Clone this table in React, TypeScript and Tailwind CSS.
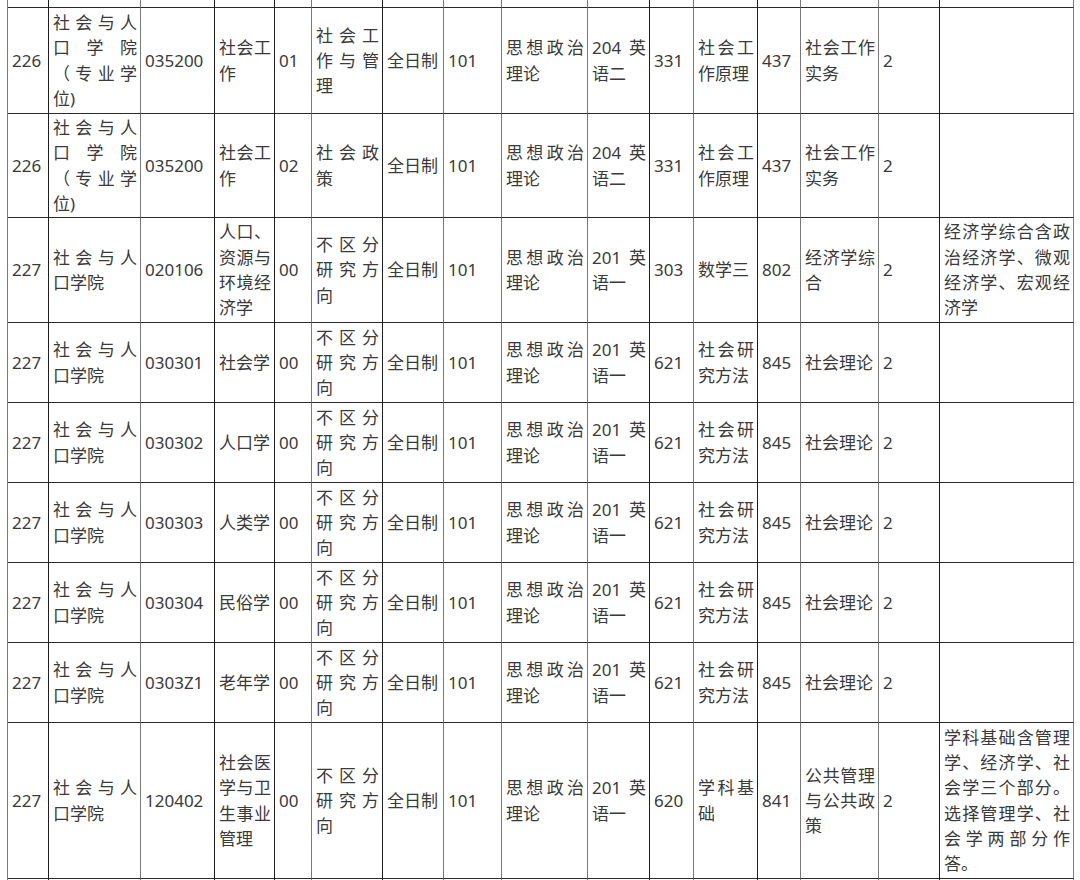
import React from "react";

const RIGHT = [
  "border-r-[#1e1e1e]",
  "border-r-[#7a7a7a]",
  "border-r-[#1e1e1e]",
  "border-r-[#1e1e1e]",
  "border-r-[#7a7a7a]",
  "border-r-[#1e1e1e]",
  "border-r-[#7a7a7a]",
  "border-r-[#7a7a7a]",
  "border-r-[#7a7a7a]",
  "border-r-[#1e1e1e]",
  "border-r-[#7a7a7a]",
  "border-r-[#1e1e1e]",
  "border-r-[#7a7a7a]",
  "border-r-[#7a7a7a]",
  "border-r-[#1e1e1e]",
  "border-r-[#7a7a7a]",
];

const common = (
  code: string,
  major: string,
  dir: string,
  dirName: string
): string[] => [
  "227",
  "社会与人口学院",
  code,
  major,
  dir,
  dirName,
  "全日制",
  "101",
  "思想政治理论",
  "201 英语一",
  "621",
  "社会研究方法",
  "845",
  "社会理论",
  "2",
  "",
];

const rows: string[][] = [
  [
    "226",
    "社会与人口学院（专业学位)",
    "035200",
    "社会工作",
    "01",
    "社会工作与管理",
    "全日制",
    "101",
    "思想政治理论",
    "204 英语二",
    "331",
    "社会工作原理",
    "437",
    "社会工作实务",
    "2",
    "",
  ],
  [
    "226",
    "社会与人口学院（专业学位)",
    "035200",
    "社会工作",
    "02",
    "社会政策",
    "全日制",
    "101",
    "思想政治理论",
    "204 英语二",
    "331",
    "社会工作原理",
    "437",
    "社会工作实务",
    "2",
    "",
  ],
  [
    "227",
    "社会与人口学院",
    "020106",
    "人口、资源与环境经济学",
    "00",
    "不区分研究方向",
    "全日制",
    "101",
    "思想政治理论",
    "201 英语一",
    "303",
    "数学三",
    "802",
    "经济学综合",
    "2",
    "经济学综合含政治经济学、微观经济学、宏观经济学",
  ],
  common("030301", "社会学", "00", "不区分研究方向"),
  common("030302", "人口学", "00", "不区分研究方向"),
  common("030303", "人类学", "00", "不区分研究方向"),
  common("030304", "民俗学", "00", "不区分研究方向"),
  common("0303Z1", "老年学", "00", "不区分研究方向"),
  [
    "227",
    "社会与人口学院",
    "120402",
    "社会医学与卫生事业管理",
    "00",
    "不区分研究方向",
    "全日制",
    "101",
    "思想政治理论",
    "201 英语一",
    "620",
    "学科基础",
    "841",
    "公共管理与公共政策",
    "2",
    "学科基础含管理学、经济学、社会学三个部分。选择管理学、社会学两部分作答。",
  ],
];

const empty = Array.from({ length: 16 }, () => "");

function Cell({ text, col }: { text: string; col: number }) {
  return (
    <div
      className={`flex items-center border-r border-b border-b-[#2a2a2a] ${RIGHT[col]} pl-[4px] pr-[3px] overflow-hidden`}
    >
      <div className="w-full text-justify">{text}</div>
    </div>
  );
}

export default function App() {
  const all = [empty, ...rows, empty];
  return (
    <div
      lang="zh-CN"
      className="w-[1080px] h-[880px] overflow-hidden bg-white text-[#3a3a3a] text-[17px] leading-[25.3px] font-['Noto_Sans','Noto_Sans_CJK_SC',sans-serif]"
    >
      <div className="ml-[7px] w-max grid grid-cols-[41px_92px_74px_60px_37px_71px_61px_58px_86px_62px_44px_64px_43px_78px_61px_134px] grid-rows-[8px_106px_104px_105px_80px_80px_80px_80px_80px_156px_40px] border-l border-l-[#7a7a7a]">
        {all.map((r, ri) =>
          r.map((t, ci) => <Cell key={`${ri}-${ci}`} text={t} col={ci} />)
        )}
      </div>
    </div>
  );
}
